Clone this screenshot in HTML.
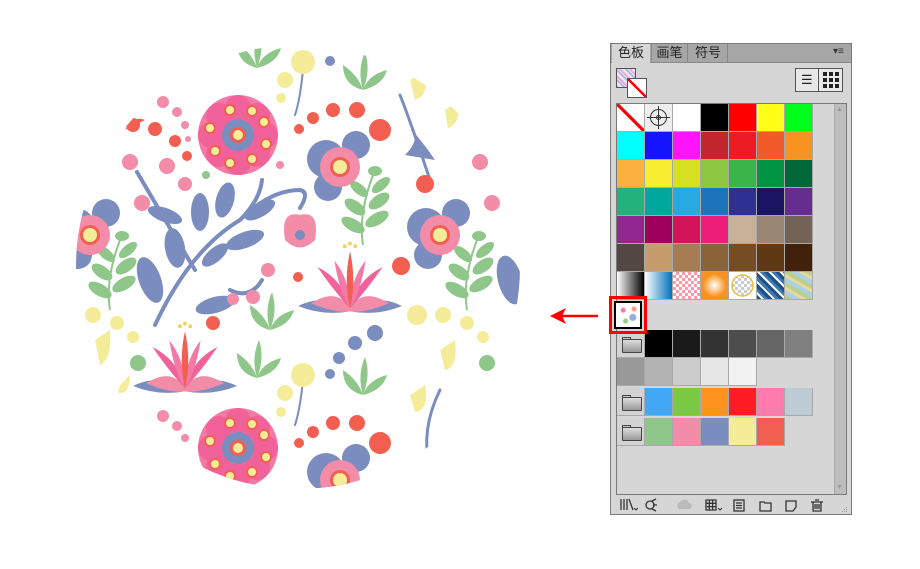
<!DOCTYPE html>
<html><head><meta charset="utf-8"><style>
*{margin:0;padding:0;box-sizing:border-box}
body{width:920px;height:569px;background:#fff;position:relative;overflow:hidden;font-family:"Liberation Sans","Noto Sans CJK SC",sans-serif}
.abs{position:absolute}
.cell{position:absolute;width:28px;height:28px;border-right:1px solid #a9a9a9;border-bottom:1px solid #a9a9a9}
.fold{position:absolute;width:28px;height:28px;background:#d3d3d3;border-right:1px solid #a9a9a9;border-bottom:1px solid #a9a9a9}
.fold::after{content:"";position:absolute;left:5px;top:9px;width:18px;height:12px;border:1px solid #444;background:linear-gradient(#ddd,#999);border-radius:1px}
.fold::before{content:"";position:absolute;left:5px;top:7px;width:7px;height:3px;border:1px solid #444;border-bottom:none;background:#ccc}
.tab{position:absolute;top:44px;height:19px;font-size:13px;color:#222;text-align:center;line-height:18px}
</style></head><body>

<svg class="abs" style="left:0;top:0" width="920" height="569" viewBox="0 0 920 569">
<defs><clipPath id="c"><circle cx="298" cy="267" r="222"/></clipPath>
<g id="fl">
<circle r="40" fill="#f47aa6"/>
<g fill="#f2629a">
<circle cx="0" cy="-27" r="13"/><circle cx="19" cy="-19" r="13"/><circle cx="27" cy="0" r="13"/><circle cx="19" cy="19" r="13"/><circle cx="0" cy="27" r="13"/><circle cx="-19" cy="19" r="13"/><circle cx="-27" cy="0" r="13"/><circle cx="-19" cy="-19" r="13"/></g>
<g fill="#f5ec99" stroke="#f25f50" stroke-width="2">
<circle cx="-8" cy="-25" r="5"/><circle cx="14" cy="-24" r="5"/><circle cx="26" cy="-13" r="5"/><circle cx="28" cy="9" r="5"/><circle cx="14" cy="24" r="5"/><circle cx="-8" cy="28" r="5"/><circle cx="-23" cy="16" r="5"/><circle cx="-28" cy="-7" r="5"/></g>
<circle r="16" fill="#7b8dbf"/><circle r="8" fill="#f25f50"/><circle r="5" fill="#f5ec99"/>
</g>
<g id="bf">
<circle cx="-14" cy="-8" r="19" fill="#7b8dbf"/><circle cx="16" cy="-22" r="14" fill="#7b8dbf"/><circle cx="-12" cy="20" r="14" fill="#7b8dbf"/>
<circle r="20" fill="#f28ca8"/><circle r="10" fill="#f25f50"/><circle r="7" fill="#f5ec99"/>
</g>
<g id="lo" transform="scale(1.3)">
<path d="M-40 10 Q-20 0 0 12 Q20 0 40 10 Q20 18 0 14 Q-20 18 -40 10Z" fill="#7b8dbf"/>
<path d="M-30 8 Q-10 -5 0 12 Q10 -5 30 8 Q10 16 0 14 Q-10 16 -30 8Z" fill="#f28ca8"/>
<path d="M-25 -20 Q-15 -5 0 12 Q-5 -10 -25 -20Z M25 -20 Q15 -5 0 12 Q5 -10 25 -20Z" fill="#f2629a"/>
<path d="M-12 -25 Q-8 0 0 12 Q0 -10 -12 -25Z M12 -25 Q8 0 0 12 Q0 -10 12 -25Z" fill="#f47aa6"/>
<path d="M0 -32 Q5 -10 0 12 Q-5 -10 0 -32Z" fill="#f25f50"/>
<circle cx="0" cy="-38" r="1.5" fill="#f5d060"/><circle cx="-4" cy="-36" r="1.5" fill="#f5d060"/><circle cx="4" cy="-36" r="1.5" fill="#f5d060"/>
</g>
<g id="gs" fill="#8fc78a">
<path d="M0 0 Q-20 -5 -20 -25 Q-5 -15 0 0Z"/><path d="M0 0 Q20 -5 24 -20 Q5 -15 0 0Z"/><path d="M0 0 Q-6 -20 2 -38 Q8 -20 0 0Z"/>
</g>
<g id="sp" fill="#8fc78a">
<path d="M0 40 Q-5 10 10 -30" stroke="#8fc78a" stroke-width="2" fill="none"/>
<ellipse cx="-10" cy="20" rx="13" ry="6" transform="rotate(30 -10 20)"/><ellipse cx="14" cy="14" rx="13" ry="6" transform="rotate(-30 14 14)"/>
<ellipse cx="-8" cy="2" rx="12" ry="6" transform="rotate(35 -8 2)"/><ellipse cx="16" cy="-4" rx="12" ry="6" transform="rotate(-35 16 -4)"/>
<ellipse cx="-4" cy="-16" rx="11" ry="5" transform="rotate(40 -4 -16)"/><ellipse cx="18" cy="-20" rx="11" ry="5" transform="rotate(-40 18 -20)"/>
<ellipse cx="12" cy="-34" rx="7" ry="5"/>
</g>
</defs>
<g clip-path="url(#c)">
<use href="#fl" x="238" y="135"/><use href="#fl" x="238" y="448"/>
<use href="#sp" x="363" y="205"/><use href="#sp" x="110" y="270"/><use href="#sp" x="467" y="270"/>
<use href="#bf" x="340" y="167"/><use href="#bf" x="440" y="235"/><use href="#bf" x="90" y="235"/><use href="#bf" x="340" y="480"/>
<use href="#lo" x="350" y="293"/><use href="#lo" x="185" y="373"/>
<use href="#gs" x="270" y="330"/><use href="#gs" x="257" y="378"/><use href="#gs" x="363" y="395"/><use href="#gs" x="257" y="68"/><use href="#gs" x="363" y="90"/>
<g stroke="#7b8dbf" stroke-width="4" fill="none" stroke-linecap="round">
<path d="M155 325 Q190 250 240 220 Q260 200 262 180"/><path d="M240 220 Q270 190 300 190 Q310 192 300 208"/>
<path d="M195 270 Q165 220 137 172"/><path d="M230 290 Q250 300 262 280"/>
<path d="M430 180 Q410 120 400 95" stroke-width="3"/><path d="M303 70 Q300 100 295 115" stroke-width="2"/>
<path d="M430 470 Q420 430 440 390" stroke-width="3"/><path d="M303 380 Q300 410 295 425" stroke-width="2"/>
</g>
<g fill="#7b8dbf">
<ellipse cx="150" cy="280" rx="11" ry="24" transform="rotate(-20 150 280)"/><ellipse cx="175" cy="248" rx="10" ry="20" transform="rotate(-10 175 248)"/>
<ellipse cx="200" cy="212" rx="9" ry="19"/><ellipse cx="225" cy="200" rx="9" ry="18" transform="rotate(15 225 200)"/>
<ellipse cx="245" cy="240" rx="20" ry="8" transform="rotate(-20 245 240)"/><ellipse cx="215" cy="305" rx="20" ry="8" transform="rotate(-15 215 305)"/>
<ellipse cx="260" cy="210" rx="17" ry="7" transform="rotate(-30 260 210)"/><ellipse cx="165" cy="215" rx="18" ry="7" transform="rotate(20 165 215)"/>
<ellipse cx="215" cy="255" rx="16" ry="7" transform="rotate(-40 215 255)"/>
<path d="M405 155 Q420 140 412 130 Q425 145 435 160Z"/><ellipse cx="510" cy="280" rx="12" ry="25" transform="rotate(-15 510 280)"/>
</g>
<path d="M285 240 Q280 210 300 215 Q320 210 315 240 Q300 255 285 240Z" fill="#f28ca8"/><circle cx="300" cy="235" r="5" fill="#7b8dbf"/>
<g fill="#f5ec99"><path d="M410 80 L425 70 Q430 95 415 100Z"/><path d="M445 110 L460 100 Q460 125 448 128Z"/><path d="M95 340 L110 330 Q112 360 100 365Z"/><path d="M120 385 L130 375 Q130 395 118 393Z"/><path d="M410 395 L425 385 Q430 410 415 412Z"/><path d="M440 350 L455 340 Q458 368 445 370Z"/></g>
<g fill="#f25f50"><circle cx="380" cy="130" r="11"/><circle cx="357" cy="110" r="8"/><circle cx="333" cy="110" r="7"/><circle cx="313" cy="118" r="6"/><circle cx="299" cy="129" r="5"/><circle cx="425" cy="184" r="9"/><circle cx="401" cy="266" r="9"/><circle cx="213" cy="323" r="7"/><circle cx="155" cy="129" r="7"/><circle cx="175" cy="141" r="6"/><circle cx="187" cy="156" r="5"/><circle cx="133" cy="125" r="7"/><circle cx="380" cy="443" r="11"/><circle cx="357" cy="423" r="8"/><circle cx="333" cy="423" r="7"/><circle cx="313" cy="432" r="6"/><circle cx="299" cy="443" r="5"/><circle cx="298" cy="277" r="5"/></g>
<g fill="#f28ca8"><circle cx="163" cy="102" r="6"/><circle cx="177" cy="112" r="5"/><circle cx="185" cy="125" r="4"/><circle cx="188" cy="139" r="3"/><circle cx="130" cy="162" r="8"/><circle cx="167" cy="166" r="8"/><circle cx="185" cy="184" r="7"/><circle cx="142" cy="203" r="8"/><circle cx="268" cy="270" r="7"/><circle cx="253" cy="297" r="7"/><circle cx="233" cy="299" r="6"/><circle cx="480" cy="162" r="8"/><circle cx="492" cy="203" r="8"/><circle cx="163" cy="416" r="6"/><circle cx="177" cy="426" r="5"/><circle cx="185" cy="438" r="4"/><circle cx="280" cy="165" r="4"/></g>
<g fill="#f5ec99"><circle cx="303" cy="62" r="12"/><circle cx="285" cy="80" r="8"/><circle cx="281" cy="98" r="5"/><circle cx="93" cy="315" r="8"/><circle cx="117" cy="323" r="7"/><circle cx="133" cy="337" r="6"/><circle cx="417" cy="315" r="10"/><circle cx="443" cy="315" r="8"/><circle cx="467" cy="323" r="7"/><circle cx="483" cy="337" r="6"/><circle cx="303" cy="375" r="12"/><circle cx="285" cy="393" r="8"/><circle cx="281" cy="412" r="5"/></g>
<g fill="#7b8dbf"><circle cx="330" cy="61" r="5"/><circle cx="375" cy="333" r="8"/><circle cx="355" cy="343" r="7"/><circle cx="339" cy="358" r="6"/><circle cx="330" cy="374" r="5"/></g>
<g fill="#8fc78a"><circle cx="138" cy="363" r="8"/><circle cx="487" cy="363" r="8"/><circle cx="206" cy="175" r="4"/></g>
<path d="M125 130 Q135 115 145 120 Z" fill="#f25f50"/>
</g>
<path d="M598 316 H558" stroke="#f00" stroke-width="2.5"/><path d="M550 316 L566 308 L562 316 L566 324Z" fill="#f00"/>
</svg>

<!-- panel -->
<div class="abs" style="left:610px;top:43px;width:242px;height:472px;background:#d6d6d6;border:1px solid #7a7a7a"></div>
<div class="abs" style="left:611px;top:44px;width:240px;height:19px;background:#a6a6a6;border-bottom:1px solid #8a8a8a"></div>
<div class="tab" style="left:612px;width:38px;background:#d6d6d6;height:20px">色板</div>
<div class="tab" style="left:651px;width:37px;border-left:1px solid #888;border-right:1px solid #888">画笔</div>
<div class="tab" style="left:689px;width:39px;border-right:1px solid #888">符号</div>
<div class="abs" style="left:833px;top:46px;font-size:10px;color:#333">▾≡</div>

<div class="abs" style="left:616px;top:68px;width:20px;height:20px;border:1px solid #555;background:repeating-linear-gradient(45deg,#f7c,#fff 3px,#9ad 5px,#fff 7px)"></div>
<div class="abs" style="left:627px;top:78px;width:20px;height:20px;border:1px solid #555;background:linear-gradient(to top right,#fff 45%,#f00 45%,#f00 55%,#fff 55%)"></div>
<div class="abs" style="left:795px;top:68px;width:48px;height:24px;border:1px solid #555;background:#e8e8e8"></div>
<div class="abs" style="left:818px;top:68px;width:1px;height:24px;background:#555"></div>
<div class="abs" style="left:801px;top:73px;font-size:13px;line-height:13px;color:#222">☰</div>
<svg class="abs" style="left:823px;top:72px" width="16" height="16"><g fill="#222"><rect x="0" y="0" width="4" height="4"/><rect x="6" y="0" width="4" height="4"/><rect x="12" y="0" width="4" height="4"/><rect x="0" y="6" width="4" height="4"/><rect x="6" y="6" width="4" height="4"/><rect x="12" y="6" width="4" height="4"/><rect x="0" y="12" width="4" height="4"/><rect x="6" y="12" width="4" height="4"/><rect x="12" y="12" width="4" height="4"/></g></svg>

<div class="abs" style="left:616px;top:103px;width:231px;height:392px;border:1px solid #7a7a7a;background:#d6d6d6"></div>
<div class="abs" style="left:834px;top:104px;width:12px;height:390px;background:#bdbdbd;border-left:1px solid #aaa"></div>
<div class="abs" style="left:836px;top:106px;font-size:7px;color:#999">▲</div>
<div class="abs" style="left:836px;top:484px;font-size:7px;color:#999">▼</div>

<div id="g"></div>
<script>
var rows=[["N","R","#fff","#000","#ff0000","#ffff1a","#00ff1a"],
["#00ffff","#1414ff","#ff14ff","#c1272d","#ed1c24","#f15a29","#f7931e"],
["#fbb040","#f9ed32","#d7df23","#8dc63f","#39b54a","#009444","#006838"],
["#23b27b","#00a79d","#27aae1","#1c75bc","#2e3192","#1b1464","#662d91"],
["#92278f","#9e005d","#d4145a","#ed1e79","#c7b299","#998675","#736357"],
["#534741","#c69c6d","#a67c52","#8c6239","#754c24","#603813","#42210b"],
["linear-gradient(90deg,#fff,#000)","linear-gradient(90deg,#fff,#0071bc)","repeating-conic-gradient(#f9a 0 25%,#fff 0 50%) 0 0/6px 6px","radial-gradient(#fff,#f7931e 60%)","radial-gradient(circle,transparent 50%,#e6c04a 52%,#e6c04a 58%,#fff 60%),repeating-conic-gradient(#ccc 0 25%,#fff 0 50%) 0 0/6px 6px","repeating-linear-gradient(45deg,#1b4f8a 0 3px,#fff 3px 5px,#3d78b0 5px 8px)","repeating-linear-gradient(30deg,#b8d08a 0 4px,#a8d0e6 4px 8px,#e8d8a0 8px 11px)"]];
var h="";
rows.forEach(function(r,i){r.forEach(function(c,j){var x=617+j*28,y=104+i*28,bg=c;
if(c=="N")bg="linear-gradient(to top right,#fff 46%,#f00 46%,#f00 54%,#fff 54%)";
if(c=="R")bg="#eee";
h+='<div class="cell" style="left:'+x+'px;top:'+y+'px;background:'+bg+'">'+(c=="R"?'<svg width="27" height="27"><circle cx="13.5" cy="13.5" r="8" fill="none" stroke="#333"/><circle cx="13.5" cy="13.5" r="2" fill="none" stroke="#333"/><path d="M2 13.5H25M13.5 2V25" stroke="#333"/></svg>':'')+'</div>';});});
function row(y,cols,folder){var s=folder?1:0;if(folder)h+='<div class="fold" style="left:617px;top:'+y+'px"></div>';
cols.forEach(function(c,j){h+='<div class="cell" style="left:'+(617+(j+s)*28)+'px;top:'+y+'px;background:'+c+'"></div>';});}
row(330,["#000","#1a1a1a","#333","#4d4d4d","#666","#808080"],1);
row(358,["#999","#b3b3b3","#ccc","#e6e6e6","#f2f2f2"],0);
row(388,["#42a7f5","#7ac943","#ff931e","#ff1d25","#ff7bac","#bdccd4"],1);
row(418,["#8fc78a","#f28ca8","#7b8dbf","#f5ec99","#f25f50"],1);
document.getElementById("g").innerHTML=h;
</script>
<div class="abs" style="left:609px;top:296px;width:38px;height:38px;border:3px solid #f00"></div>
<div class="abs" style="left:614px;top:301px;width:28px;height:28px;border:2px solid #000;background:radial-gradient(circle at 30% 30%,#f7a 2px,transparent 3px),radial-gradient(circle at 70% 60%,#9ad 3px,transparent 4px),radial-gradient(circle at 40% 75%,#9c8 2px,transparent 3px),radial-gradient(circle at 75% 25%,#f98 2px,transparent 3px),#fff"></div>

<svg class="abs" style="left:612px;top:495px" width="240" height="20">
<g stroke="#333" fill="none" stroke-width="1.3">
<path d="M9 4V15M12 4V15M15 4V15M17 4L21 15"/><path d="M22 13l2 2 2-2" stroke-width="1"/>
<circle cx="38" cy="10" r="4"/><path d="M40 6L44 4M40 14L44 16M41 10H45"/>
<path d="M94 5H104V15H94ZM94 8.3H104M94 11.6H104M97.3 5V15M100.6 5V15"/><path d="M106 13l2 2 2-2" stroke-width="1"/>
<rect x="122" y="5" width="10" height="11"/><path d="M124 8H130M124 10.5H130M124 13H130"/>
<path d="M148 7H152L153 8H159V16H148Z"/>
<path d="M174 6H184V12L181 16H174Z"/>
<path d="M199 7H211M201 7V16H209V7M203 5H207M203 9V14M205 9V14M207 9V14"/>
</g>
<path d="M67 14a4 4 0 0 1 1-7 5 5 0 0 1 9 1 3 3 0 0 1 0 6Z" fill="#bbb"/>
<g fill="#999"><rect x="234" y="16" width="1" height="1"/><rect x="232" y="16" width="1" height="1"/><rect x="230" y="16" width="1" height="1"/><rect x="234" y="14" width="1" height="1"/><rect x="232" y="14" width="1" height="1"/><rect x="234" y="12" width="1" height="1"/></g>
</svg>
</body></html>
